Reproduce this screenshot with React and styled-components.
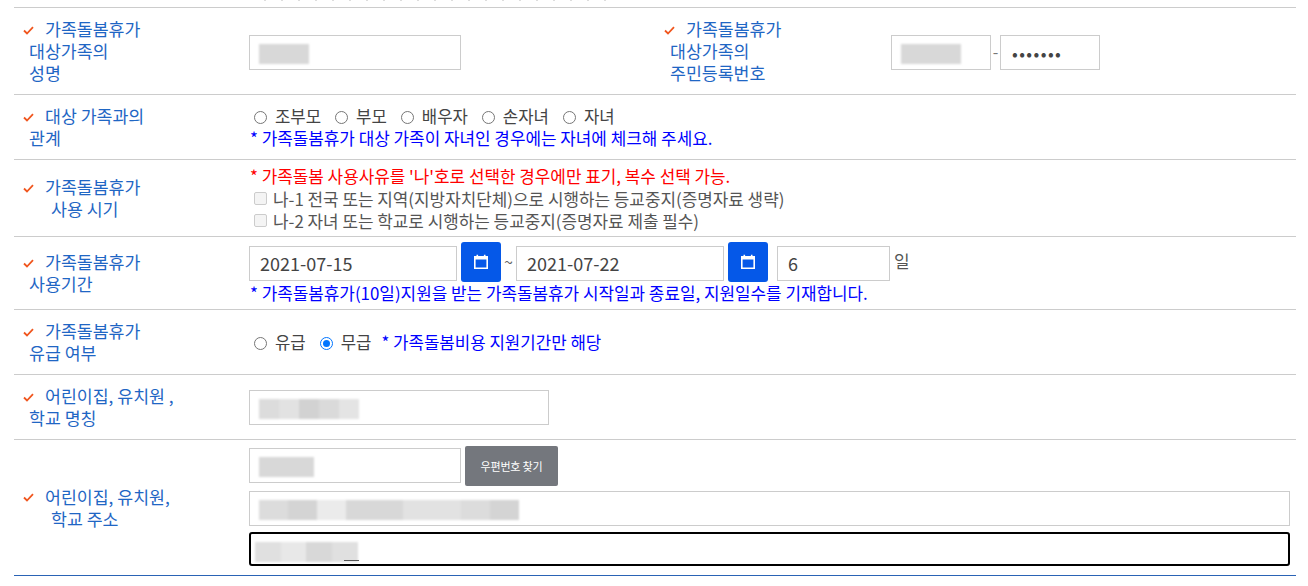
import React from "react";
import styled, { createGlobalStyle } from "styled-components";

const GlobalStyle = createGlobalStyle`
  html, body {
    margin: 0;
    padding: 0;
    background: #fff;
    overflow: hidden;
  }
  body {
    font-family: "Noto Sans CJK KR", "Noto Sans", sans-serif;
    font-size: 17px;
    color: #444;
  }
`;

const Page = styled.div`
  width: 1308px;
  height: 586px;
  overflow: hidden;
  padding: 0 12px 0 14px;
  box-sizing: border-box;
`;

/* bottoms of the line scrolled out above the first row */
const ClippedLine = styled.div`
  height: 7px;
  margin-left: 250px;
  width: 350px;
  background: repeating-linear-gradient(90deg, #ddd 0 2px, #fff 2px 17px) top left / 100% 1px no-repeat;
`;

const Row = styled.div`
  display: flex;
  align-items: center;
  height: ${(p) => p.$height}px;
  box-sizing: border-box;
  border-top: 1px solid #ccc;
  border-bottom: ${(p) => (p.$last ? "1px solid #2a63b5" : "none")};
`;

const Label = styled.div`
  flex: none;
  width: ${(p) => p.$width || 235}px;
  box-sizing: border-box;
  padding-left: 15px;
  color: #1f66c4;
  font-size: 17.3px;
  line-height: 22px;
  white-space: nowrap;
`;

const LabelLine = styled.div`
  padding-left: ${(p) => p.$indent || 0}px;
  display: flex;
  align-items: center;
`;

const Check = styled.svg`
  flex: none;
  width: 11px;
  height: 9px;
  margin-left: -6px;
  margin-right: 11px;
  margin-top: 2px;
`;

const Field = styled.div`
  flex: ${(p) => (p.$grow ? 1 : "none")};
  width: ${(p) => p.$width || "auto"};
  min-width: 0;
  display: flex;
  flex-direction: column;
`;

const Inline = styled.div`
  display: flex;
  align-items: ${(p) => p.$align || "center"};
  gap: ${(p) => p.$gap || 0}px;
`;

const Input = styled.div`
  position: relative;
  flex: none;
  width: ${(p) => p.$width};
  height: 35px;
  margin-left: ${(p) => p.$ml || 0}px;
  margin-top: ${(p) => p.$mt || 0}px;
  box-sizing: border-box;
  background: #fff;
  border: 1px solid #ccc;
  padding-left: 10px;
  font-size: 18px;
  line-height: 33px;
  color: #444;
`;

const Blur = styled.span`
  position: absolute;
  left: ${(p) => p.$left || 9}px;
  top: 8px;
  height: 20px;
  width: ${(p) => p.$width}px;
  background: ${(p) => p.$bg || "#d8d8d8"};
  filter: blur(1.2px);
`;

const Focused = styled(Input)`
  width: 100%;
  height: 34px;
  border: 2px solid #000;
  border-radius: 3px;
`;

const Caret = styled.span`
  position: absolute;
  left: 93px;
  top: 26px;
  width: 15px;
  height: 1px;
  background: #555;
`;

const Dots = styled.span`
  font-size: 17px;
  letter-spacing: 1.4px;
  padding-left: 1px;
  color: #444;
`;

const Dash = styled.span`
  width: 9px;
  text-align: center;
  color: #777;
  font-size: 16px;
`;

const Options = styled.div`
  display: flex;
  align-items: center;
  padding-left: 5px;
  height: 22px;
  font-size: 16.7px;
`;

const Radio = styled.span`
  flex: none;
  box-sizing: border-box;
  width: 13px;
  height: 13px;
  border-radius: 50%;
  border: 1px solid ${(p) => (p.$on ? "#0075ff" : "#767676")};
  background: #fff;
  margin-right: 8px;
  margin-top: 2px;
  display: flex;
  align-items: center;
  justify-content: center;
  &::after {
    content: "";
    display: ${(p) => (p.$on ? "block" : "none")};
    width: 7px;
    height: 7px;
    border-radius: 50%;
    background: #0075ff;
  }
`;

const OptionText = styled.span`
  margin-right: ${(p) => p.$gap || 14}px;
  color: #444;
`;

const Note = styled.div`
  color: ${(p) => p.$color || "#0000ff"};
  font-size: 16.9px;
  line-height: 22px;
  padding-left: 1px;
  white-space: nowrap;
`;

const InlineNote = styled(Note)`
  padding-left: 0;
  font-size: 16.8px;
`;

const CheckRow = styled.div`
  display: flex;
  align-items: center;
  height: 22px;
  padding-left: 5px;
  color: #555;
  font-size: 16.9px;
  white-space: nowrap;
`;

const Box = styled.span`
  flex: none;
  box-sizing: border-box;
  width: 13px;
  height: 13px;
  margin-right: 6px;
  border: 1px solid #ccc;
  border-radius: 2px;
  background: #f4f4f4;
`;

const CalButton = styled.button`
  flex: none;
  width: 40px;
  height: 40px;
  margin-left: 4px;
  padding: 0;
  border: none;
  border-radius: 3px;
  background: #0558e8;
  display: flex;
  align-items: center;
  justify-content: center;
`;

const Tilde = styled.span`
  width: 15px;
  margin-top: 4px;
  line-height: 30px;
  text-align: center;
  color: #666;
  font-size: 16px;
`;

const Unit = styled.span`
  margin-left: 4px;
  margin-top: 4px;
  color: #555;
  line-height: 30px;
`;

const PostButton = styled.button`
  flex: none;
  width: 93px;
  height: 40px;
  padding: 0;
  border: none;
  border-radius: 2px;
  background: #74777d;
  color: #fff;
  font-family: inherit;
  font-size: 11px;
  letter-spacing: -0.2px;
`;

const Stack = styled.div`
  display: flex;
  flex-direction: column;
  gap: ${(p) => p.$gap || 0}px;
  padding-right: 6px;
  margin-top: -4px;
`;

const tiles = (...colors) => {
  const step = 100 / colors.length;
  const stops = colors.map((c, i) => `${c} ${i * step}% ${(i + 1) * step}%`);
  return `linear-gradient(90deg, ${stops.join(", ")})`;
};

const CheckMark = () => (
  <Check viewBox="0 0 11 9">
    <path d="M1 4.5 L4 7.5 L10 1.2" fill="none" stroke="#f0561e" strokeWidth="1.8" />
  </Check>
);

const CalendarIcon = () => (
  <svg width="16" height="16" viewBox="0 0 16 16">
    <path fill="#fff" fillRule="evenodd" d="M1 2h2.5V.8h1.6V2h5.8V.8h1.6V2H15v13H1zM2.6 5.6v7.8h10.8V5.6z" />
  </svg>
);

const App = () => (
  <Page>
    <GlobalStyle />
    <ClippedLine aria-hidden="true" />

    <Row $height={87}>
      <Label>
        <LabelLine><CheckMark />가족돌봄휴가</LabelLine>
        <LabelLine>대상가족의</LabelLine>
        <LabelLine>성명</LabelLine>
      </Label>
      <Field $width="406px">
        <Input $width="212px" $mt={2}><Blur $width={50} /></Input>
      </Field>
      <Label $width={236}>
        <LabelLine><CheckMark />가족돌봄휴가</LabelLine>
        <LabelLine>대상가족의</LabelLine>
        <LabelLine>주민등록번호</LabelLine>
      </Label>
      <Field>
        <Inline>
          <Input $width="100px" $mt={2}><Blur $width={60} /></Input>
          <Dash>-</Dash>
          <Input $width="100px" $mt={2}><Dots>•••••••</Dots></Input>
        </Inline>
      </Field>
    </Row>

    <Row $height={65}>
      <Label>
        <LabelLine><CheckMark />대상 가족과의</LabelLine>
        <LabelLine>관계</LabelLine>
      </Label>
      <Field $grow>
        <Options>
          <Radio /><OptionText>조부모</OptionText>
          <Radio /><OptionText>부모</OptionText>
          <Radio /><OptionText>배우자</OptionText>
          <Radio /><OptionText>손자녀</OptionText>
          <Radio /><OptionText>자녀</OptionText>
        </Options>
        <Note>* 가족돌봄휴가 대상 가족이 자녀인 경우에는 자녀에 체크해 주세요.</Note>
      </Field>
    </Row>

    <Row $height={77}>
      <Label>
        <LabelLine><CheckMark />가족돌봄휴가</LabelLine>
        <LabelLine $indent={22}>사용 시기</LabelLine>
      </Label>
      <Field $grow>
        <Note $color="#ff0000">* 가족돌봄 사용사유를 '나'호로 선택한 경우에만 표기, 복수 선택 가능.</Note>
        <CheckRow><Box />나-1 전국 또는 지역(지방자치단체)으로 시행하는 등교중지(증명자료 생략)</CheckRow>
        <CheckRow><Box />나-2 자녀 또는 학교로 시행하는 등교중지(증명자료 제출 필수)</CheckRow>
      </Field>
    </Row>

    <Row $height={73}>
      <Label>
        <LabelLine><CheckMark />가족돌봄휴가</LabelLine>
        <LabelLine>사용기간</LabelLine>
      </Label>
      <Field $grow>
        <Inline $align="flex-start">
          <Input $width="208px" $mt={4}>2021-07-15</Input>
          <CalButton><CalendarIcon /></CalButton>
          <Tilde>~</Tilde>
          <Input $width="208px" $mt={4}>2021-07-22</Input>
          <CalButton><CalendarIcon /></CalButton>
          <Input $width="113px" $ml={9} $mt={4}>6</Input>
          <Unit>일</Unit>
        </Inline>
        <Note>* 가족돌봄휴가(10일)지원을 받는 가족돌봄휴가 시작일과 종료일, 지원일수를 기재합니다.</Note>
      </Field>
    </Row>

    <Row $height={65}>
      <Label>
        <LabelLine><CheckMark />가족돌봄휴가</LabelLine>
        <LabelLine>유급 여부</LabelLine>
      </Label>
      <Field $grow>
        <Options>
          <Radio /><OptionText>유급</OptionText>
          <Radio $on /><OptionText $gap={10}>무급</OptionText>
          <InlineNote>* 가족돌봄비용 지원기간만 해당</InlineNote>
        </Options>
      </Field>
    </Row>

    <Row $height={65}>
      <Label>
        <LabelLine><CheckMark />어린이집, 유치원 ,</LabelLine>
        <LabelLine>학교 명칭</LabelLine>
      </Label>
      <Field $grow>
        <Input $width="300px">
          <Blur $width={100} $bg={tiles("#dcdcdc", "#e2e2e2", "#d2d2d2", "#dadada", "#e4e4e4")} />
        </Input>
      </Field>
    </Row>

    <Row $height={137} $last>
      <Label>
        <LabelLine><CheckMark />어린이집, 유치원,</LabelLine>
        <LabelLine $indent={22}>학교 주소</LabelLine>
      </Label>
      <Field $grow>
        <Stack $gap={5}>
          <Inline $gap={4}>
            <Input $width="212px"><Blur $width={55} /></Input>
            <PostButton>우편번호 찾기</PostButton>
          </Inline>
          <Input $width="100%">
            <Blur $width={260} $bg={tiles("#dcdcdc", "#d4d4d4", "#ebebeb", "#d8d8d8", "#d8d8d8", "#e2e2e2", "#e2e2e2", "#dcdcdc", "#d4d4d4")} />
          </Input>
          <Focused $mt={1}>
            <Blur $left={4} $width={103} $bg={tiles("#e0e0e0", "#e8e8e8", "#d8d8d8", "#e0e0e0")} />
            <Caret />
          </Focused>
        </Stack>
      </Field>
    </Row>
  </Page>
);

export default App;
